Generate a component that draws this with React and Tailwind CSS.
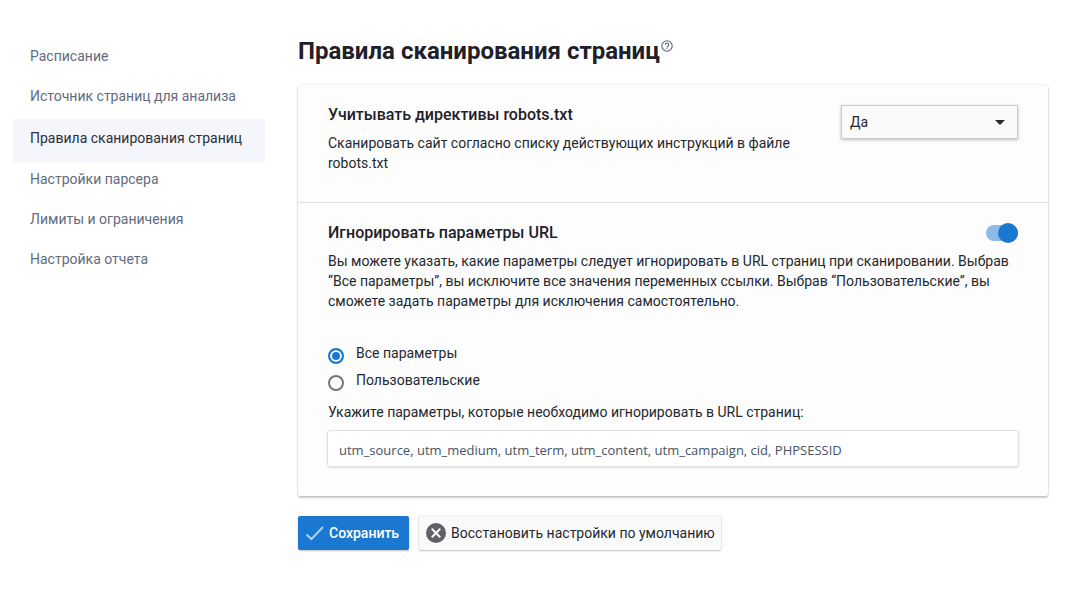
import React, { useState } from "react";

const NAV_ITEMS = [
  "Расписание",
  "Источник страниц для анализа",
  "Правила сканирования страниц",
  "Настройки парсера",
  "Лимиты и ограничения",
  "Настройка отчета",
];

const Sidebar = ({ active, onSelect }) => (
  <nav className="w-[252px] shrink-0 pt-[39px]">
    {NAV_ITEMS.map((item) => (
      <a
        key={item}
        href="#"
        onClick={(e) => {
          e.preventDefault();
          onSelect(item);
        }}
        className={
          item === active
            ? "block bg-[#f5f6fb] pt-[9px] pb-[14px] pl-[17px] text-[#2b2f38]"
            : "block pt-[7px] pb-[13px] pl-[17px] text-[#626b80] hover:text-[#2b2f38]"
        }
      >
        {item}
      </a>
    ))}
  </nav>
);

const HelpIcon = () => (
  <svg viewBox="0 0 12 12" className="h-3 w-3" fill="none" stroke="#5f6779" strokeWidth="1.1">
    <circle cx="6" cy="6" r="5.2" />
    <path d="M4.3 4.8a1.7 1.7 0 1 1 2.6 1.4c-.6.4-.9.6-.9 1.2" />
    <path d="M6 8.2v1" />
  </svg>
);

const Toggle = ({ id, checked, onChange }) => (
  <span className="relative flex h-5 w-8 shrink-0 items-center">
    <input
      id={id}
      type="checkbox"
      role="switch"
      checked={checked}
      onChange={(e) => onChange(e.target.checked)}
      className="peer h-4 w-8 cursor-pointer appearance-none rounded-full bg-[#bdbdbd] checked:bg-[#8dbae6]"
    />
    <span className="pointer-events-none absolute top-0 left-0 h-5 w-5 rounded-full bg-[#757575] peer-checked:left-3 peer-checked:bg-[#1b78d0]" />
  </span>
);

const Radio = ({ label, value, current, onChange }) => (
  <label className="flex h-[27px] cursor-pointer items-start gap-3">
    <input
      type="radio"
      name="params"
      value={value}
      checked={value === current}
      onChange={() => onChange(value)}
      className="mt-[5px] h-4 w-4 appearance-none rounded-full border-2 border-[#757575] bg-white checked:border-[#1b78d0] checked:bg-[#1b78d0] checked:shadow-[inset_0_0_0_2px_#fff]"
    />
    <span>{label}</span>
  </label>
);

export default function App() {
  const [active, setActive] = useState("Правила сканирования страниц");
  const [robots, setRobots] = useState("yes");
  const [ignore, setIgnore] = useState(true);
  const [mode, setMode] = useState("all");
  const [params, setParams] = useState(
    "utm_source, utm_medium, utm_term, utm_content, utm_campaign, cid, PHPSESSID"
  );

  return (
    <div className="flex gap-[33px] bg-white pr-[22px] pb-8 pl-[13px] font-['Roboto',sans-serif] text-sm text-[#24282f]">
      <Sidebar active={active} onSelect={setActive} />

      <main className="min-w-0 flex-1 pt-9">
        <div className="flex items-start gap-px">
          <h1 className="text-2xl leading-[30px] font-bold text-[#1f2029]">Правила сканирования страниц</h1>
          <button type="button" aria-label="Справка" className="mt-1 cursor-pointer">
            <HelpIcon />
          </button>
        </div>

        <div className="mt-[19px] rounded-xs bg-[#fdfdfd] shadow-[0_0_2px_rgba(0,0,0,0.18),0_2px_2px_rgba(0,0,0,0.2)]">
          {/* robots.txt */}
          <section className="flex items-start gap-6 border-b border-[#dcdfe6] px-[30px] pt-5 pb-[29px]">
            <div className="flex-1">
              <h2 className="text-base leading-5 font-medium text-[#1f2029]">
                <label htmlFor="robots">Учитывать директивы robots.txt</label>
              </h2>
              <p className="mt-2">Сканировать сайт согласно списку действующих инструкций в файле robots.txt</p>
            </div>
            <div className="relative w-[177px]">
              <select
                id="robots"
                value={robots}
                onChange={(e) => setRobots(e.target.value)}
                className="h-[34px] w-full cursor-pointer appearance-none border border-[#cbcbcb] bg-[#fafafa] px-2 shadow-[0_1px_3px_rgba(0,0,0,0.25)]"
              >
                <option value="yes">Да</option>
                <option value="no">Нет</option>
              </select>
              <svg viewBox="0 0 10 5" className="pointer-events-none absolute top-[15px] right-[13px] h-[5px] w-[10px]">
                <path d="M0 0h10L5 5z" fill="#24282f" />
              </svg>
            </div>
          </section>

          {/* URL parameters */}
          <section className="px-[30px] pt-5 pb-[30px]">
            <div className="flex items-center justify-between">
              <h2 className="text-base leading-5 font-medium text-[#1f2029]">
                <label htmlFor="ignore">Игнорировать параметры URL</label>
              </h2>
              <Toggle id="ignore" checked={ignore} onChange={setIgnore} />
            </div>
            <p className="mt-2">
              Вы можете указать, какие параметры следует игнорировать в URL страниц при сканировании. Выбрав
              “Все параметры”, вы исключите все значения переменных ссылки. Выбрав “Пользовательские”, вы
              сможете задать параметры для исключения самостоятельно.
            </p>

            <div className="mt-8">
              <Radio label="Все параметры" value="all" current={mode} onChange={setMode} />
              <Radio label="Пользовательские" value="custom" current={mode} onChange={setMode} />
            </div>

            <label htmlFor="params" className="mt-[5px] block">
              Укажите параметры, которые необходимо игнорировать в URL страниц:
            </label>
            <input
              id="params"
              type="text"
              value={params}
              onChange={(e) => setParams(e.target.value)}
              className="mt-[9px] block h-[35px] w-full rounded-xs bg-white px-[11px] pt-[2px] font-['Open_Sans',sans-serif] text-[13px] text-[#465364] shadow-[0_0_0_1px_#e2e2e2,0_1px_3px_rgba(0,0,0,0.25)] focus:outline-none"
            />
          </section>
        </div>

        <div className="mt-5 flex gap-[10px]">
          <button
            type="button"
            className="flex h-[34px] cursor-pointer items-center gap-1 rounded-xs bg-[#1b78d0] pr-[10px] pl-[7px] font-medium text-white shadow-[0_1px_2px_rgba(0,0,0,0.25)]"
          >
            <svg viewBox="0 0 20 20" className="h-5 w-5" fill="none" stroke="#a9d3f8" strokeWidth="2">
              <path d="M1.5 11.5l5 4.5L18 4" />
            </svg>
            Сохранить
          </button>
          <button
            type="button"
            className="flex h-[34px] cursor-pointer items-center gap-[5px] rounded-xs bg-[#fafafa] pr-[6px] pl-[7px] shadow-[0_0_2px_rgba(0,0,0,0.2),0_1px_2px_rgba(0,0,0,0.2)]"
          >
            <svg viewBox="0 0 20 20" className="h-5 w-5">
              <circle cx="10" cy="10" r="10" fill="#5f6368" />
              <path d="M5.8 5.8l8.4 8.4M14.2 5.8l-8.4 8.4" stroke="#fff" strokeWidth="2" />
            </svg>
            Восстановить настройки по умолчанию
          </button>
        </div>
      </main>
    </div>
  );
}
